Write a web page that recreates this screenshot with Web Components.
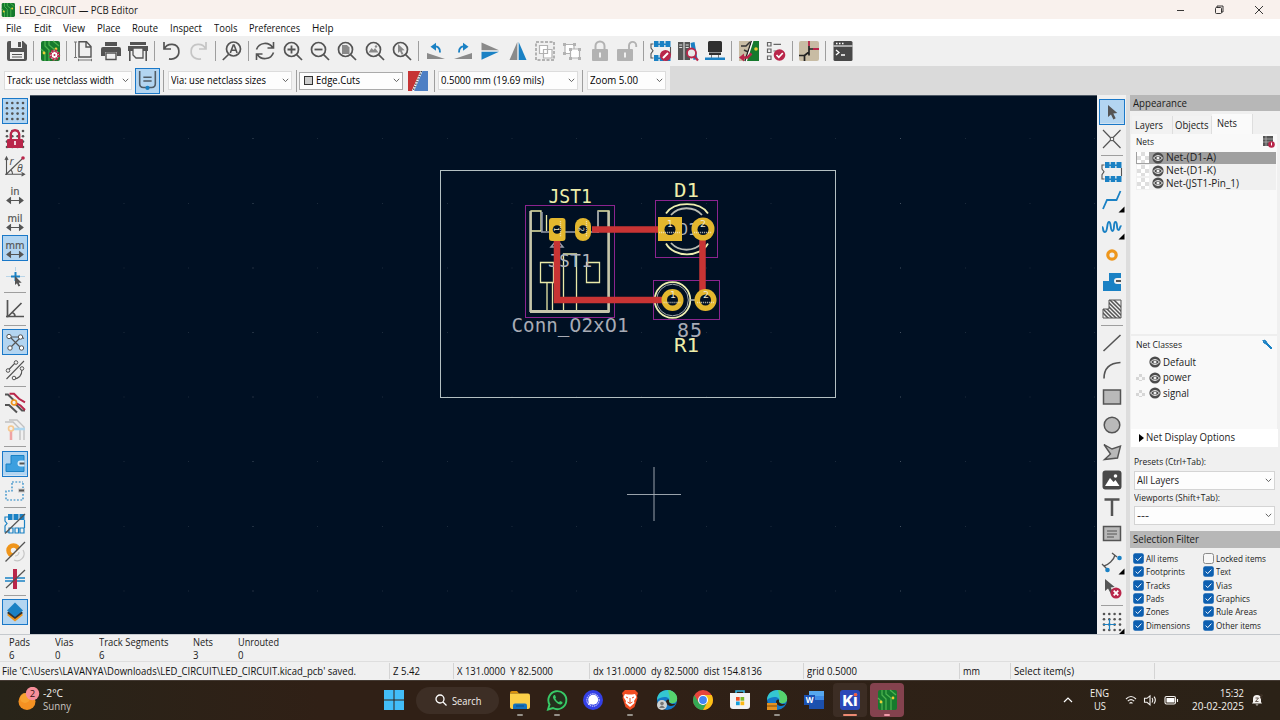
<!DOCTYPE html>
<html lang="en"><head><meta charset="utf-8"><title>LED_CIRCUIT — PCB Editor</title>
<style>html,body{margin:0;width:1280px;height:720px;overflow:hidden;background:#f0f0f0}</style></head>
<body><pcb-app></pcb-app>
<script>
const define=(name,css,html,after)=>{
  const t=document.createElement('template');
  customElements.define(name,class extends HTMLElement{
    constructor(){super();this.attachShadow({mode:'open'});}
    connectedCallback(){
      if(this.shadowRoot.childNodes.length)return;
      t.innerHTML='<style>:host{display:block;box-sizing:border-box}*{box-sizing:border-box}'+css+'</style>'+(typeof html==='function'?html(this):html);
      this.shadowRoot.append(t.content.cloneNode(true));
      if(after)after(this);
    }
  });
};
/* Label whose glyph run is condensed or widened to the width w; g is the gap before it. */
define('ui-text',':host{display:block;flex:none;white-space:pre;line-height:13px}span{display:inline-block;transform-origin:0 50%}','<span><slot></slot></span>',el=>{
  const s=el.shadowRoot.querySelector('span'),w=+el.getAttribute('w');
  if(el.hasAttribute('g'))el.style.marginLeft=el.getAttribute('g')+'px';
  if(w){const n=s.getBoundingClientRect().width;el.style.width=w+'px';if(n)s.style.transform=`scaleX(${w/n})`;}
});
const G='#545454',B='#1a81c4',R='#b9264a';
const mag=(i,c=G)=>`<g fill="none" stroke="${c}" stroke-width="1.7"><circle cx="8.5" cy="8.5" r="7"/><path d="M13.6 13.6 19 19"/></g>${i}`;
const board=`<rect x="1" y="0" width="19" height="20" rx="2" fill="#167a2d"/><path d="M5 0v5l4 4v11M9 0v4l5 4v12M13 0l6 5M1 8l4 4v8" fill="none" stroke="#4bb24e" stroke-width="1.3"/><circle cx="4" cy="12" r="1.4" fill="#e9cf35"/><circle cx="16" cy="8" r="1.4" fill="#e9cf35"/>`;
const gridDots=(c=G)=>{let s='';for(const y of[1,6.3,11.6,17])for(const x of[1,6.3,11.6,17])s+=`<circle cx="${x+1}" cy="${y+1}" r="1.3" fill="${c}"/>`;return s};
const hArrow=`<path d="M2 16.5h16M5.5 13.8 2 16.5l3.5 2.7zM14.5 13.8l3.5 2.7-3.5 2.7z" fill="${G}" stroke="${G}" stroke-width="1.1"/>`;
const unit=t=>`<text x="10" y="10.5" text-anchor="middle" textLength="${t=='in'?9:t=='mil'?15:19}" lengthAdjust="spacingAndGlyphs" font-family="DejaVu Sans" font-size="11" fill="${G}" stroke="${G}" stroke-width=".2">${t}</text>${hArrow}`;
const chip=`<g fill="${B}"><path d="M3 0h4.500v6H3zM8.700 0h4.500v6H8.700zM14.500 0h5v6h-5zM3 14h4.500v6H3zM8.700 14h4.500v6H8.700zM14.500 14h5v6h-5z"/><path d="M3 2.500h16v1.500H3zM3 16.500h16V18H3z"/></g><path d="M2.500 3H0v4l2 2.800L0 12.600V17h2.500M19.500 6v8" fill="none" stroke="${G}" stroke-width="1.1"/>`;
const lock=`<rect x="2" y="8" width="16" height="12" rx="1" fill="#b2b2b2"/><rect x="9" y="11.5" width="2" height="5" fill="#f0f0f0"/>`;
const cursor='<path d="M6 3v12l3-2.6 2.4 5 2.3-1.1-2.4-4.8 4-.5z" fill="#545454"/>';
const tail='<path d="M19.5 13.5v6h-6z" fill="#000" transform="translate(3 3)"/>';
const ICONS={
save:`<path d="M0 2a2 2 0 0 1 2-2h14l4 4v14a2 2 0 0 1-2 2H2a2 2 0 0 1-2-2z" fill="${G}"/><path d="M4 0h11v7H4zM3 11h14v7H3z" fill="#f0f0f0"/><path d="M11 1h3v5h-3zM5 13h10v1H5zM5 15.5h10v1H5z" fill="${G}"/>`,
setup:board+`<circle cx="14.500" cy="14" r="4.500" fill="#f0f0f0" stroke="${R}" stroke-width="2.300" stroke-dasharray="2.100 1.400"/><circle cx="14.500" cy="14" r="3.500" fill="#fff" stroke="${R}"/><circle cx="14.500" cy="14" r="1" fill="${R}"/>`,
page:`<path d="M6 .8h7.500L18 5.500V16H6zM13 1v5h5" fill="none" stroke="${G}" stroke-width="1.400"/><path d="M2.500 1v15.500M1 1h3M1 16.500h3M5.500 19h13M5.500 17.800v2.400M18.500 17.800v2.400" fill="none" stroke="#777" stroke-width="1"/>`,
print:`<path d="M4 1h12v4H4zM2 6h16a2 2 0 0 1 2 2v7h-4v-4H4v4H0V8a2 2 0 0 1 2-2z" fill="${G}"/><path d="M5 12h10v6.500H5z" fill="#f0f0f0" stroke="${G}" stroke-width="1.400"/>`,
plot:`<path d="M2 1h16v3H2zM0 5h20v5H0zM1 10h1.600v10H1zM17.400 10H19v10h-1.600z" fill="${G}"/><path d="M5 7h10v10H8l-3-3z" fill="#f0f0f0" stroke="${G}" stroke-width="1.300"/>`,
undo:`<path d="M3 1v7h7M3.300 8C6 1.500 17 1.500 17.800 9.500 18.500 16 13 19 8 17.800" fill="none" stroke="${G}" stroke-width="1.700"/>`,
redo:`<path d="M17 1v7h-7M16.700 8C14 1.500 3 1.500 2.200 9.500 1.500 16 7 19 12 17.800" fill="none" stroke="#c5c5c5" stroke-width="1.700"/>`,
find:`<g fill="none" stroke="${G}" stroke-width="1.700"><circle cx="11.500" cy="8" r="7"/><path d="M6.500 13.500.8 19"/></g><path d="M8.300 12l3-8h.8l3 8M9.500 9.300h4.500" fill="none" stroke="${G}" stroke-width="1.600"/>`,
refresh:`<path d="M1.500 8.500C4 1 14 .5 17.500 6.500M18.500 1v6h-6M18.500 11.500C16 19 6 19.500 2.500 13.500M1.500 19v-6h6" fill="none" stroke="${G}" stroke-width="1.600"/>`,
zin:mag(`<path d="M4.500 8.500h8M8.500 4.500v8" stroke="${G}" stroke-width="1.800"/>`),
zout:mag(`<path d="M4.500 8.500h8" stroke="${G}" stroke-width="1.800"/>`),
zpage:mag('<path d="M5 4h5l2.500 2.500V13H5z" fill="#8a8a8a"/>'),
zobj:mag('<path d="M3.500 11.500l3-4.500 2 2 1.500-2 3.500 4.500z" fill="#8a8a8a"/><circle cx="11" cy="5.500" r="1.200" fill="#8a8a8a"/>'),
zsel:mag('<path d="M6 3v9l2-1.700 1.700 3.500 1.700-.8-1.700-3.500 3-.3z" fill="#8a8a8a"/>'),
rotl:`<path d="M1 12 19 18H1z" fill="#8a8a8a"/><path d="M14 11.500C14.500 7 11 4.800 8 5.500" fill="none" stroke="${B}" stroke-width="1.900"/><path d="M4.500 5.800 10 1.800v8z" fill="${B}"/>`,
rotr:`<path d="M19 12 1 18h18z" fill="#8a8a8a"/><path d="M6 11.500C5.500 7 9 4.800 12 5.500" fill="none" stroke="${B}" stroke-width="1.900"/><path d="M15.500 5.800 10 1.800v8z" fill="${B}"/>`,
flipv:`<path d="M1.500 1.500 19 9.200H1.500z" fill="#8a8a8a"/><path d="M1.500 18.800 19 10.800H1.500z" fill="${B}"/>`,
fliph:`<path d="M9.300 1v18H1.500z" fill="#8a8a8a"/><path d="M10.700 1v18h7.800z" fill="${B}"/>`,
group:`<rect x="1" y="1" width="18" height="18" fill="none" stroke="#b2b2b2" stroke-width="2" stroke-dasharray="3 1.500"/><path d="M4.500 4.500h8v8h-8zM8.500 8.500h8.500v8.500H8.500z" fill="#fff" stroke="#b2b2b2" stroke-width="1.200"/>`,
ungroup:`<g fill="#fff" stroke="#b2b2b2" stroke-width="1.200"><path d="M3 3.500h9v9H3z"/><path d="M8.500 8h9v9h-9z"/></g><g fill="#b2b2b2"><path d="M1 2h3v3H1zM11 2h3v3h-3zM1 11h3v3H1zM7 7h3v3H7zM16 7h3v3h-3zM7 16h3v3H7zM16 16h3v3h-3z"/></g>`,
lock:lock+'<path d="M5.500 8V5a4.500 4.500 0 0 1 9 0v3" fill="none" stroke="#b2b2b2" stroke-width="2"/>',
unlock:`<g transform="translate(-2)">${lock}</g><path d="M12 8V4.500a3.600 3.600 0 0 1 7.200 0V6" fill="none" stroke="#b2b2b2" stroke-width="1.900"/>`,
fpedit:chip+`<circle cx="14.500" cy="14.500" r="5.500" fill="${R}"/><path d="M12 17l5-5" stroke="#fff" stroke-width="2"/>`,
libs:`<path d="M0 1h5.500v18H0zM6.500 1H12v18H6.500z" fill="${G}"/><path d="M1.200 4h3M1.200 6.500h3M7.700 4h3M7.700 6.500h3" stroke="#ddd"/><path d="M12.500 2l4-1 3 17-4 1z" fill="${B}"/><circle cx="13.500" cy="12" r="4.500" fill="#e8e8e8" stroke="${R}" stroke-width="1.800"/><path d="M16.500 15.500 20 19.500" stroke="${R}" stroke-width="2.200"/>`,
lib3d:`<path d="M4.500 0h11a1.500 1.500 0 0 1 1.500 1.500V11H3V1.500A1.500 1.500 0 0 1 4.500 0zM4 11.500h12V14H4z" fill="#303030"/><path d="M6 14h1v3H6zM13 14h1v3h-1z" fill="#777"/><path d="M0 16.500h20V19H0z" fill="${B}"/>`,
update:`<path d="M0 0h13L6 20H0z" fill="#c8bca4"/><path d="M14 0h6v20H7z" fill="#167a2d"/><path d="M2 5h5l4-4M5 9l4 2" stroke="#333" stroke-width="1.500" fill="none"/><path d="M12.500 0 6 20" stroke="#222" stroke-width="1.500"/><path d="M13.800 0 7.300 20" stroke="#fff" stroke-width="1.300"/><path d="M2 16.500h6.500l4-4" fill="none" stroke="${R}" stroke-width="2.500"/><path d="M0 16.500l5-4v8z" fill="${R}"/><circle cx="17" cy="8" r="1.800" fill="#e9cf35"/>`,
drc:`<g fill="none" stroke="#666" stroke-width="1.200"><path d="M1.500 1.500h3.500V5H1.500zM1.500 8h3.500v3.500H1.500zM1.500 15h3.500v3.500H1.500zM7.500 3.300H15M7.500 10h3"/></g><circle cx="13.500" cy="14" r="5.800" fill="${R}"/><path d="M10.500 14l2.300 2.300 4-4.300" fill="none" stroke="#fff" stroke-width="1.700"/>`,
sch:`<rect width="20" height="20" rx="2" fill="#c8bca4"/><path d="M10 5v3h4M10 8v3L5.500 14.500V20M0 14.500h5.500M10 11v3.500" fill="none" stroke="#222" stroke-width="1.700"/><path d="M10 0v5M14 8h6" stroke="${R}" stroke-width="1.800"/>`,
term:`<rect x=".5" y="0" width="19" height="20" rx="1.500" fill="#484848"/><path d="M.5 5h19" stroke="#eee" stroke-width="1.200"/><path d="M3 9l3 2.500L3 14M8 14h4" fill="none" stroke="#fff" stroke-width="1.300"/><path d="M3 2.500h1.500M6 2.500h1.500M9 2.500h1.500" stroke="#fff" stroke-width="1.300"/>`,
grid:gridDots(),
gridlock:gridDots()+`<rect x="2" y="10" width="16" height="9" rx="1" fill="${R}"/><path d="M5.800 10V5.500a4.200 4.200 0 0 1 8.400 0V10" fill="none" stroke="${R}" stroke-width="2.400"/><path d="M10 12v4" stroke="#fff" stroke-width="1.600"/>`,
polar:`<path d="M1.500 19V2M0 4l1.500-3L3 4M0 18.200h19M16.500 16.500l3 1.700-3 1.700M1.500 18 17 3M6 14c1 1 1.500 2.500 1.500 4" fill="none" stroke="${G}" stroke-width="1.100"/><circle cx="18" cy="2" r="1.800" fill="${R}"/><text x="4.500" y="9" font-family="Noto Sans" font-style="italic" font-size="10.500" fill="${G}">r</text><text x="12" y="16" font-family="Noto Sans" font-style="italic" font-size="10.500" fill="${G}">θ</text>`,
inch:unit('in'),mil:unit('mil'),mm:unit('mm'),
cross:`<path d="M1 10.500h5M15 10.500h5M10.500 1v4" stroke="#b9d5e8"/><path d="M6 10.500h9M10.500 6v9" stroke="${B}" stroke-width="2"/><path d="M10 10v9l2-1.700 1.500 3.200 1.700-.8-1.500-3h3z" fill="${G}"/>`,
angle:`<path d="M2.500 1v17.500M1 17.500h18M3 17.500 16.500 4M7 13.500c2 .5 3 2 3 4" fill="none" stroke="${G}" stroke-width="1.700"/>`,
rats:`<path d="M4 4l12.500 12.500M4 17 16 5H5M16 5l3 1.500" fill="none" stroke="${G}" stroke-width="1.200"/><g fill="#fff" stroke="${G}"><circle cx="4" cy="4.500" r="2.200"/><circle cx="15.500" cy="5" r="2.200"/><circle cx="5" cy="16" r="2.200"/><circle cx="16.500" cy="16" r="2.200"/></g>`,
curve:`<path d="M1.500 19 19 1M2.500 11 11 2M8 19c5 0 9-2 9-10" fill="none" stroke="${G}" stroke-width="1.100"/><g fill="#f0f0f0" stroke="${G}"><circle cx="3" cy="10.500" r="1.800"/><circle cx="11" cy="2.500" r="1.800"/><circle cx="9" cy="18" r="1.800"/><circle cx="17" cy="8.500" r="1.800"/></g>`,
inactive:`<path d="M0 1.500h3l6 6M11 11.500l6 6h3M0 12h4l8 7.500" stroke="${G}" stroke-width="2" fill="none"/><path d="M4.500.8h4.500l5 5 6 3.500M11 10l4.500 2.500L20 17" stroke="${R}" stroke-width="2" fill="none"/><circle cx="9" cy="9.500" r="2.500" fill="#f0f0f0" stroke="#ef951b" stroke-width="1.700"/>`,
netcol:`<g fill="none"><path d="M0 2h8l7 7v11M4 0h8l7 7v13" stroke="#c1c1c1" stroke-width="1.400"/><path d="M6 10v10" stroke="#efa3a3" stroke-width="2.500"/><path d="M6 9h14" stroke="#add6ee" stroke-width="2.500"/><circle cx="6" cy="8.500" r="2.500" fill="#f0f0f0" stroke="#f6c88d" stroke-width="1.600"/></g>`,
zonef:`<path d="M6 1.500h13v16H1V10h5z" fill="#3d9fdf" stroke="${B}"/><path d="M19.500 6.500h-4a3 3 0 0 0 0 6h4z" fill="#d8ecfa"/><path d="M14.500 9.500h5" stroke="${G}" stroke-width="2"/>`,
zoneo:`<path d="M7 1h11M18 2v5M18 13v6H1V10h6V1" fill="none" stroke="${B}" stroke-width="1.200" stroke-dasharray="1.800 1.600"/><path d="M13 9.500h7" stroke="#ccc" stroke-width="4"/><path d="M14 9.500h5" stroke="${G}" stroke-width="2"/>`,
padsk:`<path d="M3 0h16.500v6H3z" fill="${B}"/><path d="M8 0v6M14 0v6" stroke="#f0f0f0"/><path d="M4 14h4v5H4zM10 14h3.500v5H10zM15 14h4v5h-4zM3 3H0v4l2 2.500L0 12v6h4M19.500 6v8" fill="none" stroke="${B}" stroke-width="1.200"/><path d="M0 19.500 20 0" stroke="${G}" stroke-width="1.200"/>`,
viask:`<circle cx="12" cy="11.500" r="6.500" fill="none" stroke="#c5c5c5"/><circle cx="8.500" cy="8.500" r="5" fill="#f0f0f0" stroke="#ef951b" stroke-width="4.500"/><path d="M1 20 20 1v19z" fill="#f0f0f0"/><path d="M18 8a7 7 0 0 1-9 10M14 10a4 4 0 0 1-4 4" fill="none" stroke="#c5c5c5" stroke-width="1.200"/><path d="M.5 19.500 20 0" stroke="${G}" stroke-width="1.200"/>`,
tracksk:`<path d="M0 9h20M0 12h20" stroke="${B}" stroke-width="1.500"/><path d="M10 0v20" stroke="${R}" stroke-width="4"/><path d="M1 19 20 1" stroke="${G}" stroke-width="1.200"/>`,
layers:`<path d="M10 6l8 7-8 6.500L2 13z" fill="#ef951b"/><path d="M10 4l8 7-8 6L2 11z" fill="#333"/><path d="M10 .5 18 8.500 10 15 2 8.500z" fill="${B}"/>`,
sel:cursor,
ratsn:`<path d="M1 1 18.500 19M18.500 1 1 19" stroke="${G}" stroke-width="1.200"/><circle cx="10" cy="10" r="1.800" fill="#f0f0f0" stroke="${G}"/>`,
fp:chip,
route:`<path d="M1 19 5 10h9.500L18.500 1" fill="none" stroke="${B}" stroke-width="1.800"/>${tail}`,
tune:`<path d="M0 10c2 0 0 5 3 5s1.500-10 4-10 1 9 3.500 9 .5-9 3-9 .5 8 3 8c2 0 .5-4 3-4" fill="none" stroke="${B}" stroke-width="1.900"/>${tail}`,
via:'<circle cx="10" cy="10" r="4.200" fill="#f0f0f0" stroke="#ee961c" stroke-width="3.200"/>',
zone:`<path d="M7 1h12v5h-4a3 3 0 0 0 0 6h4v7H1V9h6z" fill="${B}"/><path d="M14 9h5" stroke="${G}" stroke-width="2"/>`,
rule:`<defs><clipPath id="h"><path d="M7 1h12v18H1V10h6z"/></clipPath></defs><path clip-path="url(#h)" d="M-5 0l20 20M-1 0l20 20M3 0l20 20M7 0l20 20M11 0l20 20M-9 0l20 20M-13 0l20 20" stroke="${G}" stroke-width="1.500"/><path d="M7 1h12v18H1V10h6z" fill="none" stroke="${G}"/>`,
line:`<path d="M1.500 18 18.500 2" stroke="${G}" stroke-width="1.600"/>`,
arc:`<path d="M2 18.500C2 8 8 3 18.500 2.500" fill="none" stroke="${G}" stroke-width="1.600"/>`,
rect:`<rect x="1.500" y="3" width="17" height="14" fill="#b9b9b9" stroke="${G}" stroke-width="1.500"/>`,
circ:`<circle cx="10" cy="10" r="7.800" fill="#b9b9b9" stroke="${G}" stroke-width="1.500"/>`,
poly:`<path d="M2 2.500l8 4.500 8.500-3-3 12-13 1.500 6-5.500z" fill="#b9b9b9" stroke="${G}" stroke-width="1.400"/>`,
img:`<rect x=".5" y=".5" width="19" height="19" rx="3" fill="#484848"/><path d="M3 16l5-8 3.500 4 2-2 4 6z" fill="#fff"/><circle cx="13.500" cy="6" r="1.800" fill="#fff"/>`,
text:`<path d="M2.500 2.500h15M10 2v17" stroke="${G}" stroke-width="2.500"/>`,
tbox:`<rect x="1.500" y="2.500" width="17" height="14" fill="#b9b9b9" stroke="${G}" stroke-width="1.500"/><path d="M5 7h10M5 10h10M5 13h7" stroke="${G}"/>`,
dim:`<path d="M2 14C6 13 12 8 13 3M0 12l5 5M10 1l5 4" fill="none" stroke="${G}" stroke-width="1.300"/><circle cx="5.500" cy="18" r="2.300" fill="${B}"/><circle cx="17.500" cy="6" r="2.300" fill="${B}"/>${tail}`,
del:`<path d="M3 0v12l3-2.600 3 5.500 2.300-1-2.600-5.300 4-.5z" fill="${G}"/><circle cx="14" cy="14" r="5.500" fill="${R}"/><path d="M11.700 11.700l4.600 4.600M16.300 11.700l-4.600 4.600" stroke="#fff" stroke-width="1.800"/>`,
origin:gridDots()+`<path d="M1 12.500h13M7.500 7v11" stroke="${B}" stroke-width="1.200"/>${tail}`
};
define('ui-icon',':host{display:grid;place-items:center;flex:none;width:27.4px;height:27.4px}:host([on]){background:linear-gradient(#b3d5f1,#b3d5f1) center/24.500px 24.500px no-repeat;}:host([on]) svg{outline:1px solid #1a78c8;outline-offset:2px}svg{width:20px;height:20px;overflow:visible;display:block}',el=>`<svg viewBox="0 0 20 20">${ICONS[el.getAttribute('n')]}</svg>`);
define('ui-sep',':host{flex:none;width:5.900px;height:20px;background:linear-gradient(#9e9e9e,#9e9e9e) center/1px 100% no-repeat}:host([h]){width:22px;height:5.900px;background-size:100% 1px}','');
define('icon-bar',':host{display:flex;align-items:center}:host([v]){flex-direction:column}',el=>el.getAttribute('items').split(' ').map(n=>n=='|'?`<ui-sep ${el.hasAttribute('v')?'h':''}></ui-sep>`:`<ui-icon n="${n.replace('*','')}" ${n.endsWith('*')?'on':''}></ui-icon>`).join(''));
define('ui-combo',':host{display:flex;align-items:center;flex:none;height:19px;background:#fdfdfd;border:1px solid #dcdcdc;padding-right:2px}svg{margin-left:auto;flex:none}','<slot></slot><svg width="7" height="5" viewBox="0 0 7 5"><path d="M.8 .8 3.500 3.600 6.200.8" fill="none" stroke="#555" stroke-width=".9"/></svg>');
define('title-bar',':host{display:flex;align-items:center;height:19px;background:#f9f1ed;color:#1a1a1a;padding-left:1px;font-size:10.800px}.b{width:14px;height:14px}.w{margin-left:auto;margin-right:14px}',
`<svg class="b" viewBox="0 0 20 20">${board}</svg><ui-text g="4" w="119">LED_CIRCUIT — PCB Editor</ui-text><svg class="w" width="90" height="12" viewBox="0 0 90 12"><g fill="none" stroke="#222" stroke-width=".9"><path d="M1 6.500h7M79 2l8 8M87 2l-8 8"/><rect x="39.500" y="3.500" width="6" height="6" rx="1"/><path d="M41 3.500V2h6v6h-1.500"/></g></svg>`);
define('menu-bar',':host{display:flex;align-items:center;height:17px;background:#fff;padding:1px 0 0 6px;color:#111;font-size:10.300px}',[['File',15.500,0],['Edit',17.500,12],['View',22,12],['Place',23.500,11.500],['Route',26,12],['Inspect',32,12],['Tools',23.500,11.500],['Preferences',51,11.500],['Help',21.500,12]].map(a=>`<ui-text g="${a[2]}" w="${a[1]}">${a[0]}</ui-text>`).join(''));
define('option-bar',':host{display:flex;align-items:center;height:29px;background:#dadada}.o{display:flex;align-items:center;width:670px;height:100%;background:#f0f0f0;padding-left:4px}.t{width:25px;height:26px;border:1px solid #1a78c8;background:#b3d5f1;margin-left:3px}ui-sep{height:22px}.k{width:9px;height:9px;border:1.500px solid #333;background:#ccc;margin-left:4px}',
`<div class="o"><ui-combo style="width:128px"><ui-text g="1.500" w="107">Track: use netclass width</ui-text></ui-combo>
<svg class="t" viewBox="0 0 25 26"><path d="M4 2v14q0 4 4 4h9q4 0 4-4V2M8 9h9M8 13h9" fill="none" stroke="#505c66" stroke-width="1.700"/><circle cx="12.500" cy="20.500" r="2.300" fill="${B}"/></svg><ui-sep style="margin-left:1px"></ui-sep>
<ui-combo style="width:124px;margin-left:1.500px"><ui-text g="1.500" w="95">Via: use netclass sizes</ui-text></ui-combo><ui-sep style="margin-left:1px"></ui-sep>
<ui-combo style="width:104px;margin-left:0;border-color:#aaa;height:18px"><div class="k"></div><ui-text g="2.500" w="44">Edge.Cuts</ui-text></ui-combo>
<svg width="20" height="20" viewBox="0 0 20 20" style="margin-left:5px"><path d="M0 0h13L4 20H0z" fill="#c63434"/><path d="M13 0h7v20H4z" fill="#4d7fc4"/><path d="M13.500 0 5 20" stroke="#fff" stroke-width="2"/><path d="M13.500 0 5 20" stroke="#222" stroke-width="1.200" stroke-dasharray="1.500 1.200"/></svg><ui-sep style="margin-left:3px"></ui-sep>
<ui-combo style="width:140px;margin-left:1px"><ui-text g="2" w="103">0.5000 mm (19.69 mils)</ui-text></ui-combo><ui-sep style="margin-left:1px"></ui-sep>
<ui-combo style="width:79px;margin-left:2px"><ui-text g="1.500" w="48">Zoom 5.00</ui-text></ui-combo></div>`);

/* The free drawing area; its viewBox starts at the window position of the canvas. */
let dots='';for(const x of[58.5,123.5,188,252.500,317,382,447,511.500,576,641,706,770.500,835,900,965,1029.500,1094])for(const y of[138,203,267.500,332,396.500,461,526,590.500])dots+=`<rect x="${x}" y="${y}" width="1" height="1" fill="#6f7b88" opacity="${[252.500,900].includes(x)?.6:.25}"/>`;
define('pcb-canvas',':host{background:#001023;border-top:1px solid #4e5965;overflow:hidden}svg{display:block}text{font-family:"DejaVu Sans"}.m{font-family:"DejaVu Sans Mono"}',
`<svg width="1067" height="539" viewBox="30 96 1067 539">${dots}
<rect x="440.500" y="170.500" width="395" height="227" fill="none" stroke="#b3c0c2"/>
<g fill="none" stroke="#8b248f"><rect x="525.500" y="205.500" width="89" height="112"/><rect x="655.500" y="200.500" width="62" height="57"/><rect x="653.500" y="280.500" width="66" height="39"/></g>
<g fill="none" stroke="#e9e9a8" stroke-width="1.300"><path d="M531 312V211h10v20M531 231h10M546.500 215v16M609 312V211h-11v22M540.500 262.500h13v20h-13zM586.500 262.500h13v20h-13zM563.500 312v-58h13v58M547 283v29M552.500 283v29"/></g>
<path d="M530 311.500h79.500" stroke="#c6c6ac" stroke-width="3.200"/><path d="M530.500 211v101M608.500 211v101" stroke="#c6c6ac" stroke-width="2.400"/>
<path d="M542 212v20h6M598 211v22M541 232h56M551 247l6-7 6 7z" fill="none" stroke="#979caa" stroke-width="1.500"/>
<g fill="none" stroke="#eeeeb0" stroke-width="1.800"><path d="M666 213.500C674 201 700 201 708 213.500M666 243.500C674 258 700 258 708 243.500"/><path d="M671 215c8-9 23-9 31 0M671 243c8 9 23 9 31 0" stroke="#b9bcb4"/><circle cx="672.500" cy="300" r="17.800"/><circle cx="672.500" cy="300" r="15.800" stroke="#a4a9ad" stroke-width="1"/></g>
<g class="g" fill="#b0b4bd"><text class="m" x="548" y="267" font-size="18" textLength="44">JST1</text><text class="m" x="679" y="234.500" font-size="15" textLength="18">D1</text></g>
<path d="M557 229.500v70.500H672M592 229.500h70M702.500 230v69" fill="none" stroke="#c83434" stroke-width="6.500"/><path d="M690 300h8" stroke="#b5b9b5" stroke-width="1.500"/>
<g fill="#e3b72e"><rect x="549" y="218" width="16.500" height="23" rx="3"/><rect x="575" y="218" width="16" height="23" rx="8"/><rect x="658" y="217" width="24" height="24"/><circle cx="703" cy="229" r="11.500"/><circle cx="672.500" cy="300" r="11"/><circle cx="705.500" cy="300" r="11"/></g>
<g fill="#001023"><circle cx="557" cy="229.500" r="4.300"/><circle cx="583" cy="229.500" r="4.300"/><circle cx="670" cy="229.500" r="5.500"/><circle cx="703" cy="229.500" r="5.500"/><circle cx="672.500" cy="300" r="5.500"/><circle cx="705.500" cy="300" r="5.500"/></g>
<g fill="#eee8d0" font-size="9.500" text-anchor="middle"><text x="670" y="227">1</text><text x="703" y="227">2</text><text x="673" y="298">1</text><text x="706" y="298">2</text><text transform="translate(554 229.500) rotate(90)" font-size="7">1</text><text transform="translate(579 229.500) rotate(90)" font-size="7">2</text></g>
<g stroke="#f3ead0" stroke-width="1.300" stroke-dasharray="1.200 .8" opacity=".7"><path d="M659 232.500h21M694 232.500h18M663.500 302.500h17M697 302.500h17M560.500 221v16M586.500 221v16"/></g>
<g fill="#eeeeaa"><text class="m" x="548.500" y="202.500" font-size="19.500" textLength="43.500" lengthAdjust="spacingAndGlyphs">JST1</text><text class="m" x="674" y="196.500" font-size="20" textLength="25" lengthAdjust="spacingAndGlyphs">D1</text><text class="m" x="674" y="351.500" font-size="20" textLength="25" lengthAdjust="spacingAndGlyphs">R1</text></g>
<g fill="#a8abb5"><text class="m" x="511.500" y="332" font-size="19" textLength="117" lengthAdjust="spacingAndGlyphs">Conn_<tspan font-family="DejaVu Sans">0</tspan>2x<tspan font-family="DejaVu Sans">0</tspan>1</text><text class="m" x="677" y="337" font-size="20" textLength="25">85</text></g>
<path d="M627 494.500h54M654 467v54" stroke="#aab3bb" stroke-width=".9"/></svg>`);

const eye='<svg width="12" height="12" viewBox="0 0 12 12" style="flex:none"><circle cx="6" cy="6" r="5.600" fill="#4c4c4c"/><path d="M1.500 6q4.500-5 9 0-4.500 5-9 0z" fill="none" stroke="#fff" stroke-width=".9"/><circle cx="6" cy="6" r="1.500" fill="#eee"/></svg>';
const checker='<div style="flex:none;width:12px;height:11px;background:repeating-conic-gradient(#dedede 0 25%,#fff 0 50%) 0 0/8px 8px"></div>';
define('net-row',':host{display:flex;align-items:center;height:12.700px;padding-left:1px;background:#f0f0f0}:host([on]){background:#a0a0a0}',checker+eye.replace('flex:none','flex:none;margin:0 2px 0 3px')+'<slot></slot>');
define('class-row',':host{display:flex;align-items:center;height:15.500px;padding-left:0}i{flex:none;width:9px;height:7px;margin-right:4px}:host([c]) i{background:repeating-conic-gradient(#d6d6d6 0 25%,#f8f8f8 0 50%) 0 0/6px 6px}',`<i></i>${eye}<slot></slot>`);
define('check-item',':host{display:flex;align-items:center;height:13.300px}svg{width:11px;height:11px;flex:none;margin-right:2px}',el=>`<svg viewBox="0 0 11 11">${el.hasAttribute('off')?'<rect x=".5" y=".5" width="10" height="10" rx="2" fill="#f7f7f7" stroke="#8a8a8a"/>':'<rect x=".2" y=".2" width="10.600" height="10.600" rx="2" fill="#0d5fb0"/><path d="M2.700 5.600l2 2 3.700-4" fill="none" stroke="#fff"/>'}</svg><slot></slot>`);
define('side-panel',`:host{display:flex;flex-direction:column;width:154px;background:#f0f0f0;border-left:4px solid #dddddd;font-size:10.300px;color:#1b1b1b}
.h{height:16px;flex:none;background:#b7b7b7;display:flex;align-items:center;padding-left:2.500px;font-size:10.600px}
.tabs{display:flex;height:23px;flex:none;align-items:flex-end;padding-left:2px}.tab{height:18px;width:41px;padding:3px 0 0 3px;border-right:1px solid #dedede;background:#f2f2f2}.tab.a{background:#fafafa;height:20px}
.nets{height:202px;margin:0 3px 0 1px;background:#f9f9f9;padding:1px 1px 0 5px;flex:none;border-bottom:2px solid #eee}.row{display:flex;align-items:center;justify-content:space-between;height:13px;margin-bottom:3.500px;font-size:9.500px;padding-right:1px}
.cls{height:93px;flex:none;margin:0 3px 0 1px;background:#f9f9f9;padding:2px 3px 0 5px}.ndo{flex:none;height:18px;margin:0 2px 0 1px;background:#fff;display:flex;align-items:center;padding:0 0 1px 8px}
.f{padding:8px 4px 0 4px;height:102px;flex:none}.f ui-combo{border-color:#d4d4d4;margin:2px 0 6px;width:141px}.l{font-size:9.600px;line-height:14px;height:14px}
.chk{display:grid;grid-template-columns:70px 1fr;padding:4px 0 0 3px;font-size:9.800px}`,
`<div class="h"><ui-text w="54">Appearance</ui-text></div>
<div class="tabs"><div class="tab"><ui-text w="28">Layers</ui-text></div><div class="tab" style="width:39px;padding-left:2px"><ui-text w="33.500">Objects</ui-text></div><div class="tab a" style="padding-left:5px"><ui-text w="20">Nets</ui-text></div></div>
<div class="nets"><div class="row"><ui-text w="18">Nets</ui-text><svg width="12" height="12" viewBox="0 0 12 12"><path d="M0 0h10v10H0z" fill="#555"/><path d="M0 3h10M0 6h10M3 0v10" stroke="#bbb" stroke-width=".7"/><circle cx="8.500" cy="8.500" r="3.300" fill="${R}"/><path d="M8.500 6.500v3" stroke="#fff"/></svg></div>
<net-row on><ui-text w="50">Net-(D1-A)</ui-text></net-row><net-row><ui-text w="50">Net-(D1-K)</ui-text></net-row><net-row><ui-text w="73">Net-(JST1-Pin_1)</ui-text></net-row></div>
<div class="cls"><div class="row"><ui-text w="46">Net Classes</ui-text><svg width="11" height="11" viewBox="0 0 11 11"><path d="M1 1l1 3 2 1 5 5 1-1-5-5-1-2-2-1 1 2-1 1z" fill="${B}" stroke="${B}"/></svg></div>
<class-row><ui-text g="1.500" w="33">Default</ui-text></class-row><class-row c><ui-text g="1.500" w="28">power</ui-text></class-row><class-row c><ui-text g="1.500" w="26">signal</ui-text></class-row></div>
<div class="ndo"><svg width="5" height="8" viewBox="0 0 5 8"><path d="M0 0l5 4-5 4z"/></svg><ui-text g="2" w="89">Net Display Options</ui-text></div>
<div class="f"><div class="l"><ui-text w="72">Presets (Ctrl+Tab):</ui-text></div><ui-combo><ui-text g="2" w="42">All Layers</ui-text></ui-combo><div class="l" style="margin-top:-5px"><ui-text w="86">Viewports (Shift+Tab):</ui-text></div><ui-combo style="margin-top:1px"><ui-text g="2" w="12">---</ui-text></ui-combo></div>
<div class="h" style="margin-top:-18px;height:17px"><ui-text w="66">Selection Filter</ui-text></div>
<div class="chk">${[['All items',32],['Locked items',50],['Footprints',39],['Text',15],['Tracks',24],['Vias',16],['Pads',18],['Graphics',34],['Zones',23],['Rule Areas',41],['Dimensions',44],['Other items',45]].map((a,i)=>`<check-item ${i==1?'off':''}><ui-text w="${a[1]}">${a[0]}</ui-text></check-item>`).join('')}</div>`);
define('info-bar',':host{display:flex;height:27px;background:#f0f0f0;padding:1px 0 0 9px;font-size:10.300px;color:#222;border-top:1px solid #c5c9cd}div{flex:none}',
[['Pads',21,'6',46],['Vias',18.500,'0',43.500],['Track Segments',69.500,'6',94.500],['Nets',20,'3',45],['Unrouted',41,'0',60]].map(a=>`<div style="width:${a[3]}px"><ui-text w="${a[1]}">${a[0]}</ui-text><ui-text w="5.500">${a[2]}</ui-text></div>`).join(''));
define('status-bar',':host{display:flex;height:19px;background:#f0f0f0;border-top:1px solid #dedede;font-size:10.300px;color:#111}div{flex:none;border-right:1px solid #d4d4d4;height:16px;padding:2px 0 0 2.500px;display:flex;margin-top:1px}',
`<div style="width:390px;padding-left:1.500px"><ui-text w="354">File 'C:\\Users\\LAVANYA\\Downloads\\LED_CIRCUIT\\LED_CIRCUIT.kicad_pcb' saved.</ui-text></div><div style="width:64px"><ui-text w="27">Z 5.42</ui-text></div><div style="width:136px"><ui-text g=".5" w="96">X 131.0000  Y 82.5000</ui-text></div><div style="width:214px"><ui-text w="169">dx 131.0000  dy 82.5000  dist 154.8136</ui-text></div><div style="width:156px"><ui-text w="50">grid 0.5000</ui-text></div><div style="width:51px"><ui-text w="17">mm</ui-text></div><div style="width:144px"><ui-text w="60">Select item(s)</ui-text></div>`);

const edge='<circle cx="10" cy="10" r="10" fill="#1478c8"/><path d="M0 10C0-2 19-4 20 9c0 5-7 5-8 3 2-5-6-7-12-2z" fill="#34c7d1"/><path d="M11 0c7 1 10 6 9 10-1 4-7 4-8 2 2-3 0-7-1-12z" fill="#56d36e"/><path d="M12 12c1 2 6 3 7 1-2 4-9 4-10-1 0-2 2-3 3-2z" fill="#2c2016"/>';
const APPS={
win:'<g fill="#42bdf8"><path d="M0 0h9.500v9.500H0zM10.500 0H20v9.500h-9.500zM0 10.500h9.500V20H0zM10.500 10.500H20V20h-9.500z"/></g>',
files:'<path d="M0 3q0-2 2-2h5l2 2.500H0z" fill="#d8920f"/><path d="M0 3.500h18q2 0 2 2V17q0 2-2 2H2q-2 0-2-2z" fill="#fbcf48"/><path d="M3 19v-3.500q0-2 2-2h10q2 0 2 2V19z" fill="#1271bd"/><path d="M6 16h8" stroke="#0a4e87"/>',
wa:'<path d="M1 19.500l1.500-5A9 9 0 1 1 6 18z" fill="#24301d" stroke="#38ca67" stroke-width="1.900"/><path d="M7 5q-2.500 2 1 6t6 3.500q2-1 1.500-2.500l-2.500-1-1 1.200Q9 11 8.300 8.300L9 7.500 8 5z" fill="#38ca67"/>',
sig:'<circle cx="10" cy="10" r="10" fill="#3440e6"/><circle cx="10.200" cy="9.800" r="5" fill="#fff"/><path d="M5 15l1-4 3 3z" fill="#fff"/><circle cx="10" cy="10" r="6.200" fill="none" stroke="#fff" stroke-width=".9" stroke-dasharray="1.500 .8"/>',
brave:'<path d="M5 0h10l3 3-1 3 .5 2-3 9-4.500 3-4.500-3-3-9L3 6 2 3z" fill="#f04d22"/><path d="M5 4l3 .5h4l3-.5 1.500 3-2.500 4 .5 2-4.500 4-4.500-4 .5-2L3.500 7z" fill="#fff"/><path d="M6 7l2 1M14 7l-2 1M10 8v5M7.500 12l2.500 1.500 2.500-1.500" stroke="#f04d22" fill="none"/>',
edge:edge+'<circle cx="5" cy="15" r="5" fill="#cfd1d1"/><circle cx="5" cy="13.500" r="1.800" fill="#777"/><path d="M2 18q3-5 6 0z" fill="#777"/>',
chrome:'<circle cx="10" cy="10" r="10" fill="#e8453c"/><path d="M1.340 5A10 10 0 0 0 10 20l4.300-7.500L10 15l-4.300-2.500z" fill="#34a853"/><path d="M10 5h8.660A10 10 0 0 1 10 20l4.300-7.500z" fill="#fbc116"/><circle cx="10" cy="10" r="5" fill="#fff"/><circle cx="10" cy="10" r="3.900" fill="#4385f4"/>',
store:'<path d="M6 4V1h8v3" fill="none" stroke="#3abbe8" stroke-width="1.500"/><path d="M0 3h20v13q0 3-3 3H3q-3 0-3-3z" fill="#f2f3f4"/><path d="M6 7h3.700v3.700H6z" fill="#f04e23"/><path d="M10.500 7h3.700v3.700h-3.700z" fill="#7cb928"/><path d="M6 11.500h3.700v3.700H6z" fill="#169fdc"/><path d="M10.500 11.500h3.700v3.700h-3.700z" fill="#fdb813"/>',
edge2:edge+'<rect x="0" y="13" width="10" height="7" fill="#e49121"/><path d="M0 16h10" stroke="#7d4a0c"/>',
word:'<path d="M5 1h15v18H5z" fill="#3f8be5"/><path d="M5 10h15v9H5z" fill="#1c50ac"/><path d="M5 1h15v5H5z" fill="#56a7ee"/><rect x="0" y="5" width="11" height="10" fill="#1b52b4"/><text x="5.500" y="13" text-anchor="middle" font-family="Open Sans" font-weight="700" font-size="8" fill="#fff">W</text>',
ki:'<rect width="20" height="20" rx="3" fill="#2a48b8"/><text x="10" y="16" text-anchor="middle" font-family="Inter" font-weight="800" font-size="15" textLength="15" fill="#fff">Ki</text><circle cx="15.500" cy="4.700" r="1.800" fill="#f35c3c"/>',
pcb:board};
define('task-app',':host{display:grid;place-items:center;flex:none;width:34px;height:34px;border-radius:4px;position:relative}:host([hot]){background:#3c2d24}:host([act]){background:#84424e}svg{width:20px;height:20px;overflow:visible}:host([run])::after{content:"";position:absolute;left:14px;bottom:1px;width:6px;height:2.500px;border-radius:2px;background:var(--mark,#959089)}:host([hot])::after{width:14px!important;left:10px!important;}',el=>`<svg viewBox="0 0 20 20">${APPS[el.getAttribute('n')]}</svg>`);
define('task-bar',':host{display:flex;align-items:center;height:40px;background:linear-gradient(90deg,#282419,#302016 25%,#302016 50%,#2b2217);color:#f4f1ee;font-size:10.300px;border-top:1px solid #443a33;padding-bottom:1px}.wx{flex:none;margin-left:18px}.c{flex:none;width:60px}.s{display:flex;align-items:center;flex:none;width:83px;height:27px;border-radius:14px;background:#3d2e25;padding-left:19px;margin:0 4px 0 5px;font-size:11px}.apps{display:flex;gap:2.700px}.r{display:flex;flex-direction:column;align-items:flex-end}.tray{margin-left:auto;display:flex;align-items:center;padding-right:17px}',
`<svg class="wx" width="25" height="26" viewBox="0 0 25 26"><circle cx="9" cy="14.500" r="8.500" fill="#f49122"/><circle cx="7" cy="11" r="5" fill="#f8aa37" opacity=".7"/><circle cx="14.500" cy="6.500" r="6.700" fill="#f78e99"/><text x="14.500" y="10" text-anchor="middle" font-family="Open Sans" font-size="9.500" fill="#3a1010">2</text></svg>
<div class="c"><ui-text w="20">-2°C</ui-text><ui-text w="28" style="color:#c9c5c0">Sunny</ui-text></div>
<task-app n="win" style="margin-left:274px"></task-app>
<div class="s"><svg width="12" height="12" viewBox="0 0 12 12"><g fill="none" stroke="#fff" stroke-width="1.300"><circle cx="5" cy="5" r="4"/><path d="M8 8l3.500 3.500"/></g></svg><ui-text g="4.500" w="29.500">Search</ui-text></div>
<div class="apps"><task-app n="files" run></task-app><task-app n="wa" run></task-app><task-app n="sig"></task-app><task-app n="brave" run></task-app><task-app n="edge"></task-app><task-app n="chrome"></task-app><task-app n="store"></task-app><task-app n="edge2" run></task-app><task-app n="word"></task-app><task-app n="ki" run hot style="--mark:#ee8b72"></task-app><task-app n="pcb" run act style="--mark:#f19ba9"></task-app></div>
<div class="tray"><svg width="10" height="6" viewBox="0 0 10 6"><path d="M1 5l4-4 4 4" fill="none" stroke="#fff" stroke-width="1.200"/></svg>
<div class="r" style="align-items:center;margin-left:17px"><ui-text w="19">ENG</ui-text><ui-text w="12">US</ui-text></div>
<svg width="54" height="12" viewBox="0 0 54 12" style="margin-left:16px"><g fill="none" stroke="#f4f1ee" stroke-width="1.100"><path d="M1 5q5-5 10 0M2.800 7.200q3.200-3.200 6.400 0M4.500 9.300q1.500-1.400 3 0M19.500 4.300h2.500l3-2.500v9L22 8.300h-2.500zM27 4q1.500 2 0 4.500M29 2.700q2.700 3.300 0 7"/><rect x="40" y="2.500" width="10.500" height="7.500" rx="1.500"/><path d="M52.500 5v3"/></g><path d="M41.500 4h8v4.500h-8z" fill="#fff"/></svg>
<div class="r" style="margin-left:13px"><ui-text w="24">15:32</ui-text><ui-text w="52">20-02-2025</ui-text></div>
<svg width="12" height="13" viewBox="0 0 12 13" style="margin-left:7px"><path d="M1 9.500 2 8V5q0-4 4-4t4 4v3l1 1.500zM4.500 10.500h3q-1.500 2-3 0z" fill="#f4f1ee"/><path d="M4.500 4h3l-3 3.500h3M9 1h2.500L9 4h2.500" fill="none" stroke="#4a3b30" stroke-width=".8"/></svg></div>`);
define('pcb-app',':host{display:flex;flex-direction:column;width:1280px;height:720px;background:#f0f0f0;font-family:"Open Sans","Noto Sans",sans-serif;font-size:10.300px}.main{display:flex;height:539px;flex:none}.top{height:30px;flex:none;padding-left:3px}.l{width:30px;padding-top:2.700px}.r{width:29px;padding:3px 0 0 1.600px;flex:none;overflow:hidden}pcb-canvas{width:1067px;flex:none}title-bar,menu-bar,option-bar,info-bar,status-bar,task-bar{flex:none}',
`<title-bar></title-bar><menu-bar></menu-bar>
<icon-bar class="top" items="save | setup | page print plot | undo redo | find | refresh zin zout zpage zobj zsel | rotl rotr flipv fliph group ungroup lock unlock | fpedit libs lib3d | update drc | sch | term"></icon-bar>
<option-bar></option-bar>
<div class="main"><icon-bar v class="l" items="grid* gridlock polar inch mil mm* cross | angle | rats* curve | inactive netcol | zonef* zoneo | padsk viask tracksk | layers*"></icon-bar><pcb-canvas></pcb-canvas><icon-bar v class="r" items="sel* ratsn | fp route tune via zone rule | line arc rect circ poly img text tbox dim del | origin"></icon-bar><side-panel></side-panel></div>
<info-bar></info-bar><status-bar></status-bar><task-bar></task-bar>`);
</script></body></html>
